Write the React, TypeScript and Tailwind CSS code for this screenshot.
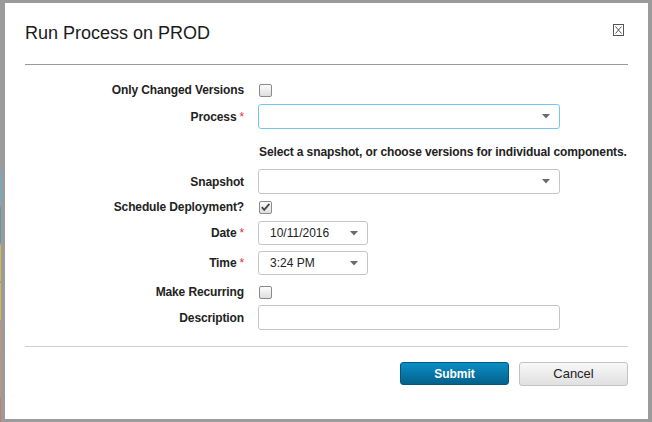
import React from "react";

const font = { fontFamily: '"Liberation Sans", Arial, sans-serif' };

const Label = ({ text, required }: { text: string; required?: boolean }) => (
  <div className="w-[240px] shrink-0 pr-[1px] text-right text-[12px] font-bold leading-none tracking-[-0.12px] text-[#222]">
    {text}
    {required && <span className="ml-[3px] font-normal text-[#e0303a]">*</span>}
  </div>
);

const Arrow = () => (
  <svg width="8" height="5" viewBox="0 0 8 5" className="shrink-0">
    <path d="M0 0h8L4 4.5z" fill="#6b6b6b" />
  </svg>
);

const Checkbox = ({ checked }: { checked?: boolean }) => (
  <div className="ml-[14px] flex h-[13px] w-[13px] items-center justify-center rounded-[2px] border border-[#8a8a8a] bg-gradient-to-b from-[#fdfdfd] to-[#dedede]">
    {checked && (
      <svg width="11" height="10" viewBox="0 0 11 10">
        <path d="M1.8 5.2l2.4 2.6L9.4 1.8" stroke="#444" strokeWidth="1.8" fill="none" />
      </svg>
    )}
  </div>
);

const Select = ({ value, width, focus }: { value?: string; width: string; focus?: boolean }) => (
  <div
    className={`ml-[13px] flex h-full items-center justify-between rounded-[3px] border bg-white pl-[11px] pr-[9px] text-[12px] text-[#222] ${width} ${
      focus ? "border-[#76c6ee]" : "border-[#c6c6c6]"
    }`}
  >
    <span>{value}</span>
    <Arrow />
  </div>
);

export default function App() {
  return (
    <div className="flex h-[422px] w-[652px] bg-[#9b9b9b]" style={font}>
      <div className="flex w-[1px] flex-col">
        <div className="h-[170px]" />
        <div className="h-[35px] bg-[#5eb4d6]" />
        <div className="h-[2px]" />
        <div className="h-[36px] bg-[#5f9c9c]" />
        <div className="h-[2px]" />
        <div className="h-[36px] bg-[#d6bb4c]" />
        <div className="h-[2px]" />
        <div className="h-[37px] bg-[#d6bb4c]" />
        <div className="h-[2px]" />
        <div className="h-[36px] bg-[#c99274]" />
        <div className="h-[2px]" />
        <div className="h-[36px] bg-[#c99274]" />
        <div className="h-[2px]" />
        <div className="flex-1 bg-[#c47e6e]" />
      </div>
      <div className="mb-[3px] ml-[4px] mr-[4px] mt-[3px] flex flex-1 flex-col bg-white">
        <div className="mx-[20px] flex h-[62px] items-start justify-between border-b border-[#9a9a9a]">
          <div className="pt-[19px] text-[18px] leading-[22px] text-[#1a1a1a]">Run Process on PROD</div>
          <div className="mr-[4px] mt-[21px] flex h-[12px] w-[11px] items-center justify-center border border-[#555]">
            <svg width="7" height="8" viewBox="0 0 7 8">
              <path d="M0.5 0.5l6 7M6.5 0.5l-6 7" stroke="#555" strokeWidth="1" />
            </svg>
          </div>
        </div>

        <div className="flex flex-col">
          <div className="mt-[16px] flex h-[18px] items-center">
            <Label text="Only Changed Versions" />
            <Checkbox />
          </div>
          <div className="mt-[5px] flex h-[25px] items-center">
            <Label text="Process" required />
            <Select width="w-[302px]" focus />
          </div>
          <div className="mt-[14px] flex h-[18px] items-center pl-[254px] text-[12px] font-bold tracking-[-0.12px] text-[#222]">
            Select a snapshot, or choose versions for individual components.
          </div>
          <div className="mt-[8px] flex h-[25px] items-center">
            <Label text="Snapshot" />
            <Select width="w-[302px]" />
          </div>
          <div className="mt-[4px] flex h-[18px] items-center">
            <Label text="Schedule Deployment?" />
            <Checkbox checked />
          </div>
          <div className="mt-[5px] flex h-[24px] items-center">
            <Label text="Date" required />
            <Select width="w-[110px]" value="10/11/2016" />
          </div>
          <div className="mt-[6px] flex h-[24px] items-center">
            <Label text="Time" required />
            <Select width="w-[110px]" value="3:24 PM" />
          </div>
          <div className="mt-[8px] flex h-[18px] items-center">
            <Label text="Make Recurring" />
            <Checkbox />
          </div>
          <div className="mt-[4px] flex h-[25px] items-center">
            <Label text="Description" />
            <div className="ml-[13px] h-full w-[302px] rounded-[3px] border border-[#c6c6c6] bg-white" />
          </div>
        </div>

        <div className="mx-[20px] mt-[16px] border-t border-[#cfcfcf]" />

        <div className="mr-[20px] mt-[15px] flex justify-end gap-[10px]">
          <button className="h-[23px] w-[109px] rounded-[3px] border border-[#04577c] bg-gradient-to-b from-[#0b8fc6] to-[#04618c] text-[12px] font-bold text-white">
            Submit
          </button>
          <button className="h-[24px] w-[109px] rounded-[3px] border border-[#c3c3c3] bg-gradient-to-b from-[#f8f8f8] to-[#e0e0e0] text-[13px] text-[#222]">
            Cancel
          </button>
        </div>
      </div>
    </div>
  );
}
